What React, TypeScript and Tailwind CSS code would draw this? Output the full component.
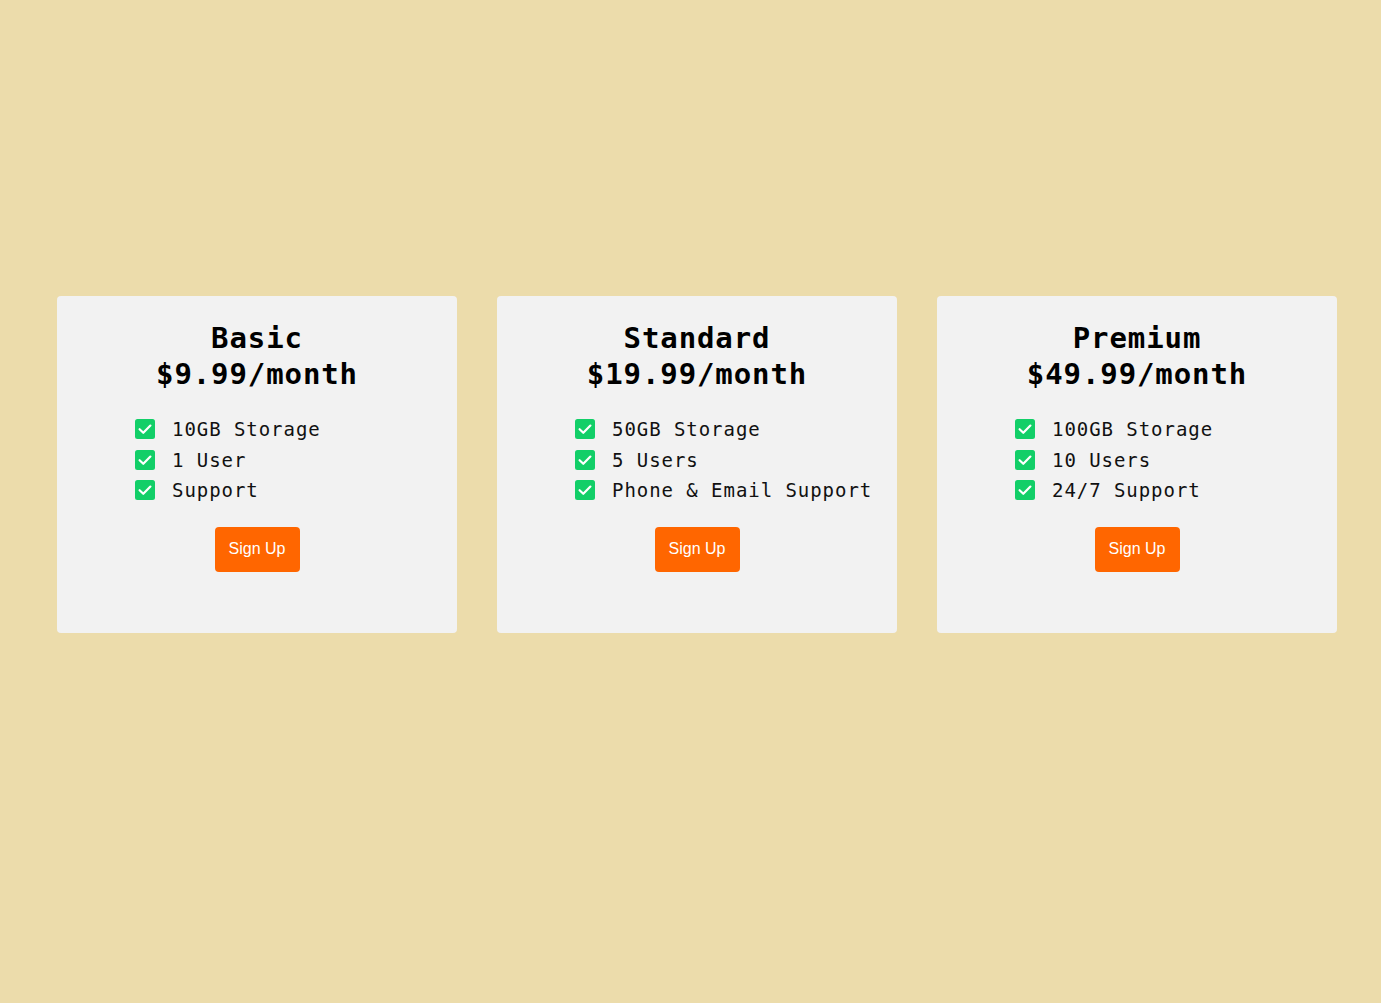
import React from "react";

const plans = [
  { name: "Basic", price: "$9.99/month", features: ["10GB Storage", "1 User", "Support"] },
  { name: "Standard", price: "$19.99/month", features: ["50GB Storage", "5 Users", "Phone & Email Support"] },
  { name: "Premium", price: "$49.99/month", features: ["100GB Storage", "10 Users", "24/7 Support"] },
];

function Check() {
  return (
    <svg width="20" height="20" viewBox="0 0 20 20" className="shrink-0">
      <rect x="0" y="0" width="20" height="20" rx="2.5" fill="#12cf68" />
      <path d="M4.6 10.2 L8.3 13.8 L15.4 6.6" fill="none" stroke="#fff" strokeWidth="2.2" strokeLinecap="round" strokeLinejoin="round" />
    </svg>
  );
}

function Card({ name, price, features }: { name: string; price: string; features: string[] }) {
  return (
    <div className="w-[400px] h-[337px] bg-[#f2f2f2] rounded-[4px] pt-[24px]">
      <h2 className="text-center font-bold text-[29px] leading-[36px] tracking-[0.9px] text-black font-['DejaVu_Sans_Mono',monospace]">
        {name}
        <br />
        {price}
      </h2>
      <ul className="mt-[22px] ml-[78px] flex flex-col font-['DejaVu_Sans_Mono',monospace] text-[19px] tracking-[0.95px] text-[#111]">
        {features.map((f) => (
          <li key={f} className="flex items-center gap-[17px] h-[30.5px] whitespace-pre">
            <Check />
            <span>{f}</span>
          </li>
        ))}
      </ul>
      <div className="flex justify-center mt-[21px]">
        <button className="w-[85px] h-[45px] bg-[#ff6600] text-white rounded-[4px] text-[16px] font-['Liberation_Sans',Arial,sans-serif]">
          Sign Up
        </button>
      </div>
    </div>
  );
}

export default function App() {
  return (
    <div className="min-h-[1003px] w-full bg-[#ecdcab] pt-[296px] pl-[57px]">
      <div className="flex gap-[40px]">
        {plans.map((p) => (
          <Card key={p.name} {...p} />
        ))}
      </div>
    </div>
  );
}
